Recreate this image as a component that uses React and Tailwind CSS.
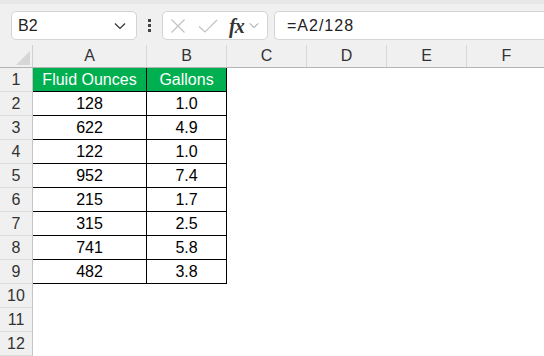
import React from "react";

const cols = [
  { key: "A", w: "w-[114px]" },
  { key: "B", w: "w-[80px]" },
  { key: "C", w: "w-[80px]" },
  { key: "D", w: "w-[80px]" },
  { key: "E", w: "w-[80px]" },
  { key: "F", w: "w-[80px]" },
];

const data = [
  ["128", "1.0"],
  ["622", "4.9"],
  ["122", "1.0"],
  ["952", "7.4"],
  ["215", "1.7"],
  ["315", "2.5"],
  ["741", "5.8"],
  ["482", "3.8"],
];

function Chevron({ className }) {
  return (
    <svg viewBox="0 0 12 8" className={className} fill="none" stroke="currentColor" strokeWidth="1.2">
      <path d="M1 1.5 L6 6.5 L11 1.5" />
    </svg>
  );
}

function FormulaBar() {
  return (
    <div className="h-[45px] bg-[#f0f0f0] flex items-start pt-[7px] border-t-[4px] border-[#e8e8e8]">
      <div className="ml-[11px] w-[126px] h-[29px] bg-white border border-[#d4d4d4] rounded-[5px] flex items-center pl-[6px] pr-[10px] justify-between">
        <span className="text-[16px] text-[#222]">B2</span>
        <Chevron className="w-[12px] h-[8px] text-[#333]" />
      </div>
      <div className="w-[25px] h-[29px] flex flex-col items-center justify-center gap-[2px]">
        <span className="w-[3px] h-[3px] bg-[#444]" />
        <span className="w-[3px] h-[3px] bg-[#444]" />
        <span className="w-[3px] h-[3px] bg-[#444]" />
      </div>
      <div className="w-[106px] h-[29px] bg-white border border-[#d4d4d4] rounded-[5px] flex items-center pl-[7px]">
        <svg viewBox="0 0 16 16" className="w-[16px] h-[16px] text-[#c0c0c0]" fill="none" stroke="currentColor" strokeWidth="1.1">
          <path d="M1.5 1.5 L14.5 14.5 M14.5 1.5 L1.5 14.5" />
        </svg>
        <svg viewBox="0 0 20 16" className="ml-[12px] w-[20px] h-[16px] text-[#c0c0c0]" fill="none" stroke="currentColor" strokeWidth="1.1">
          <path d="M1 8.5 L7 14 L19 2" />
        </svg>
        <span className="ml-[11px] text-[20px] italic font-bold text-[#333] leading-none tracking-[-1px]" style={{ fontFamily: '"Liberation Serif", serif' }}>
          fx
        </span>
        <Chevron className="ml-[5px] w-[10px] h-[7px] text-[#888]" />
      </div>
      <div className="ml-[6px] flex-1 h-[29px] bg-white border border-r-0 border-[#d4d4d4] rounded-l-[5px] flex items-center pl-[12px]">
        <span className="text-[16px] text-[#222] tracking-[1px]">=A2/128</span>
      </div>
    </div>
  );
}

export default function App() {
  return (
    <div
      className="w-[544px] h-[356px] overflow-hidden bg-white"
      style={{ fontFamily: '"Liberation Sans", Arial, sans-serif' }}
    >
      <FormulaBar />

      {/* column header row */}
      <div className="flex h-[23px] bg-[#f0f0f0] border-b border-[#b4b4b4]">
        <div className="w-[33px] shrink-0 border-r border-[#d0d0d0] overflow-hidden">
          <svg viewBox="0 0 33 23" className="w-[33px] h-[23px]">
            <path d="M30 6 L30 20 L16 20 Z" fill="#d6d6d6" />
          </svg>
        </div>
        {cols.map((c) => (
          <div
            key={c.key}
            className={`${c.w} shrink-0 border-r border-[#d8d8d8] flex items-center justify-center text-[16px] text-[#333]`}
          >
            {c.key}
          </div>
        ))}
      </div>

      {/* rows */}
      {Array.from({ length: 12 }).map((_, i) => {
        const rowNum = i + 1;
        const isHeader = rowNum === 1;
        const values = isHeader ? ["Fluid Ounces", "Gallons"] : data[i - 1];
        const inTable = rowNum <= 9;
        return (
          <div key={rowNum} className="flex h-[24px]">
            <div className="w-[33px] shrink-0 bg-[#f0f0f0] border-r border-[#c4c4c4] border-b border-b-[#dcdcdc] flex items-center justify-center text-[16px] text-[#333]">
              {rowNum}
            </div>
            {inTable ? (
              <>
                <div
                  className={`w-[114px] shrink-0 flex items-center justify-center text-[16px] border-r border-b border-black ${
                    isHeader ? "bg-[#00b050] text-white" : "text-black"
                  }`}
                >
                  {values[0]}
                </div>
                <div
                  className={`w-[80px] shrink-0 flex items-center justify-center text-[16px] border-r border-b border-black ${
                    isHeader ? "bg-[#00b050] text-white" : "text-black"
                  }`}
                >
                  {values[1]}
                </div>
              </>
            ) : null}
          </div>
        );
      })}
    </div>
  );
}
